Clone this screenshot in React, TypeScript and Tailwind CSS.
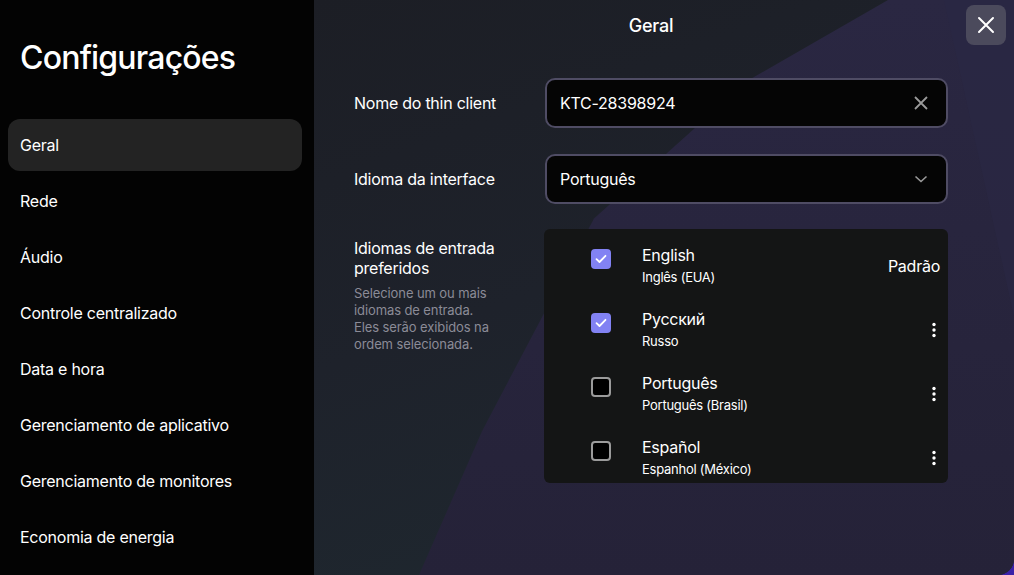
import React from 'react';

const font = { fontFamily: 'Inter, "Noto Sans", sans-serif' };

const navItems = [
    'Geral',
    'Rede',
    'Áudio',
    'Controle centralizado',
    'Data e hora',
    'Gerenciamento de aplicativo',
    'Gerenciamento de monitores',
    'Economia de energia',
];

const languages = [
    { name: 'English', sub: 'Inglês (EUA)', checked: true, isDefault: true },
    { name: 'Русский', sub: 'Russo', checked: true },
    { name: 'Português', sub: 'Português (Brasil)', checked: false },
    { name: 'Español', sub: 'Espanhol (México)', checked: false },
];

function Kebab() {
    return (
        <svg width="4" height="16" viewBox="0 0 4 16" className="text-white">
            <circle cx="2" cy="2.5" r="1.7" fill="currentColor" />
            <circle cx="2" cy="8" r="1.7" fill="currentColor" />
            <circle cx="2" cy="13.5" r="1.7" fill="currentColor" />
        </svg>
    );
}

function Checkbox({ checked }: { checked: boolean }) {
    if (checked) {
        return (
            <div className="w-5 h-5 rounded-[4px] bg-[#8282f3] flex items-center justify-center">
                <svg width="12" height="10" viewBox="0 0 12 10" fill="none">
                    <path d="M1.5 5.2 L4.5 8 L10.5 1.8" stroke="white" strokeWidth="1.8" strokeLinecap="round" strokeLinejoin="round" />
                </svg>
            </div>
        );
    }
    return <div className="w-5 h-5 rounded-[4px] border-2 border-[#9b9b9b] bg-black" />;
}

export default function App() {
    return (
        <div className="w-[1014px] h-[575px] bg-[#3a20a8] overflow-hidden" style={font}>
            <div className="flex w-full h-full rounded-br-[16px] overflow-hidden">
                {/* Sidebar */}
                <aside className="w-[314px] shrink-0 bg-[#030303] text-white">
                    <h1 className="pl-5 pt-[38px] h-[119px] text-[32px] leading-10 font-medium tracking-[-0.8px]">
                        Configurações
                    </h1>
                    <nav className="pl-2 pr-3 flex flex-col gap-1">
                        {navItems.map((item, i) => (
                            <div
                                key={item}
                                className={`h-[52px] px-3 flex items-center rounded-[12px] text-[16px] tracking-[-0.25px] ${i === 0 ? 'bg-[#232323]' : ''}`}
                            >
                                {item}
                            </div>
                        ))}
                    </nav>
                </aside>

                {/* Main */}
                <main className="relative flex-1 bg-[linear-gradient(160deg,#1c1e25_0%,#1e222b_45%,#1f2a31_100%)] text-white overflow-hidden">
                    <div className="absolute inset-0 bg-[linear-gradient(180deg,#2a2742_0%,#252238_100%)] [clip-path:polygon(82%_0,100%_0,100%_100%,15%_100%,24%_75%,40%_38%,62%_14%)]" />
                    <div className="absolute inset-0 bg-[#2a2844] opacity-60 [clip-path:polygon(90%_0,100%_0,100%_55%)]" />

                    <div className="relative">
                        <header className="h-[50px] flex items-center justify-center pr-[26px]">
                            <span className="text-[18px] font-medium tracking-[-0.2px]">Geral</span>
                            <button className="absolute right-2 top-[5px] w-10 h-10 rounded-[8px] bg-[#4b4a5c] flex items-center justify-center">
                                <svg width="18" height="18" viewBox="0 0 18 18" fill="none">
                                    <path d="M2 2 L16 16 M16 2 L2 16" stroke="white" strokeWidth="2" strokeLinecap="round" />
                                </svg>
                            </button>
                        </header>

                        <div className="pl-10 pr-[66px] pt-[28px] flex flex-col gap-[26px] tracking-[-0.25px]">
                            {/* Thin client name */}
                            <div className="flex items-center">
                                <label className="w-[191px] shrink-0 text-[16px]">Nome do thin client</label>
                                <div className="flex-1 h-[50px] rounded-[10px] border-2 border-[#4f4c64] bg-[#050505] flex items-center pl-[13px] pr-[18px]">
                                    <span className="flex-1 text-[16px]">KTC-28398924</span>
                                    <svg width="14" height="14" viewBox="0 0 14 14" fill="none">
                                        <path d="M1 1 L13 13 M13 1 L1 13" stroke="#9b9b9b" strokeWidth="1.8" />
                                    </svg>
                                </div>
                            </div>

                            {/* Interface language */}
                            <div className="flex items-center">
                                <label className="w-[191px] shrink-0 text-[16px]">Idioma da interface</label>
                                <div className="flex-1 h-[50px] rounded-[10px] border-2 border-[#4f4c64] bg-[#050505] flex items-center pl-[13px] pr-[18px]">
                                    <span className="flex-1 text-[16px]">Português</span>
                                    <svg width="14" height="8" viewBox="0 0 14 8" fill="none">
                                        <path d="M1.5 1.5 L7 6.5 L12.5 1.5" stroke="#9b9b9b" strokeWidth="1.6" />
                                    </svg>
                                </div>
                            </div>

                            {/* Input languages */}
                            <div className="flex items-start -mt-px">
                                <div className="w-[190px] shrink-0 pt-[9px]">
                                    <div className="w-[150px] text-[16px] leading-5">Idiomas de entrada preferidos</div>
                                    <p className="w-[142px] mt-[7px] text-[13px] leading-[17px] text-[#8b8b97] tracking-[-0.1px]">
                                        Selecione um ou mais idiomas de entrada. Eles serão exibidos na ordem selecionada.
                                    </p>
                                </div>
                                <div className="w-[405px] h-[254px] overflow-hidden rounded-[6px] bg-[#141515] pt-[5px]">
                                    {languages.map((lang) => (
                                        <div key={lang.name} className="h-16 flex pl-[47px] pr-2">
                                            <div className="pt-[15px]">
                                                <Checkbox checked={lang.checked} />
                                            </div>
                                            <div className="flex-1 pl-[31px] pt-[11px]">
                                                <div className="text-[16px] leading-5">{lang.name}</div>
                                                <div className="mt-[3px] text-[13px] leading-[18px]">{lang.sub}</div>
                                            </div>
                                            <div className="flex items-center">
                                                {lang.isDefault ? (
                                                    <span className="text-[16px]">Padrão</span>
                                                ) : (
                                                    <span className="pr-[4px]"><Kebab /></span>
                                                )}
                                            </div>
                                        </div>
                                    ))}
                                </div>
                            </div>
                        </div>
                    </div>
                </main>
            </div>
        </div>
    );
}
